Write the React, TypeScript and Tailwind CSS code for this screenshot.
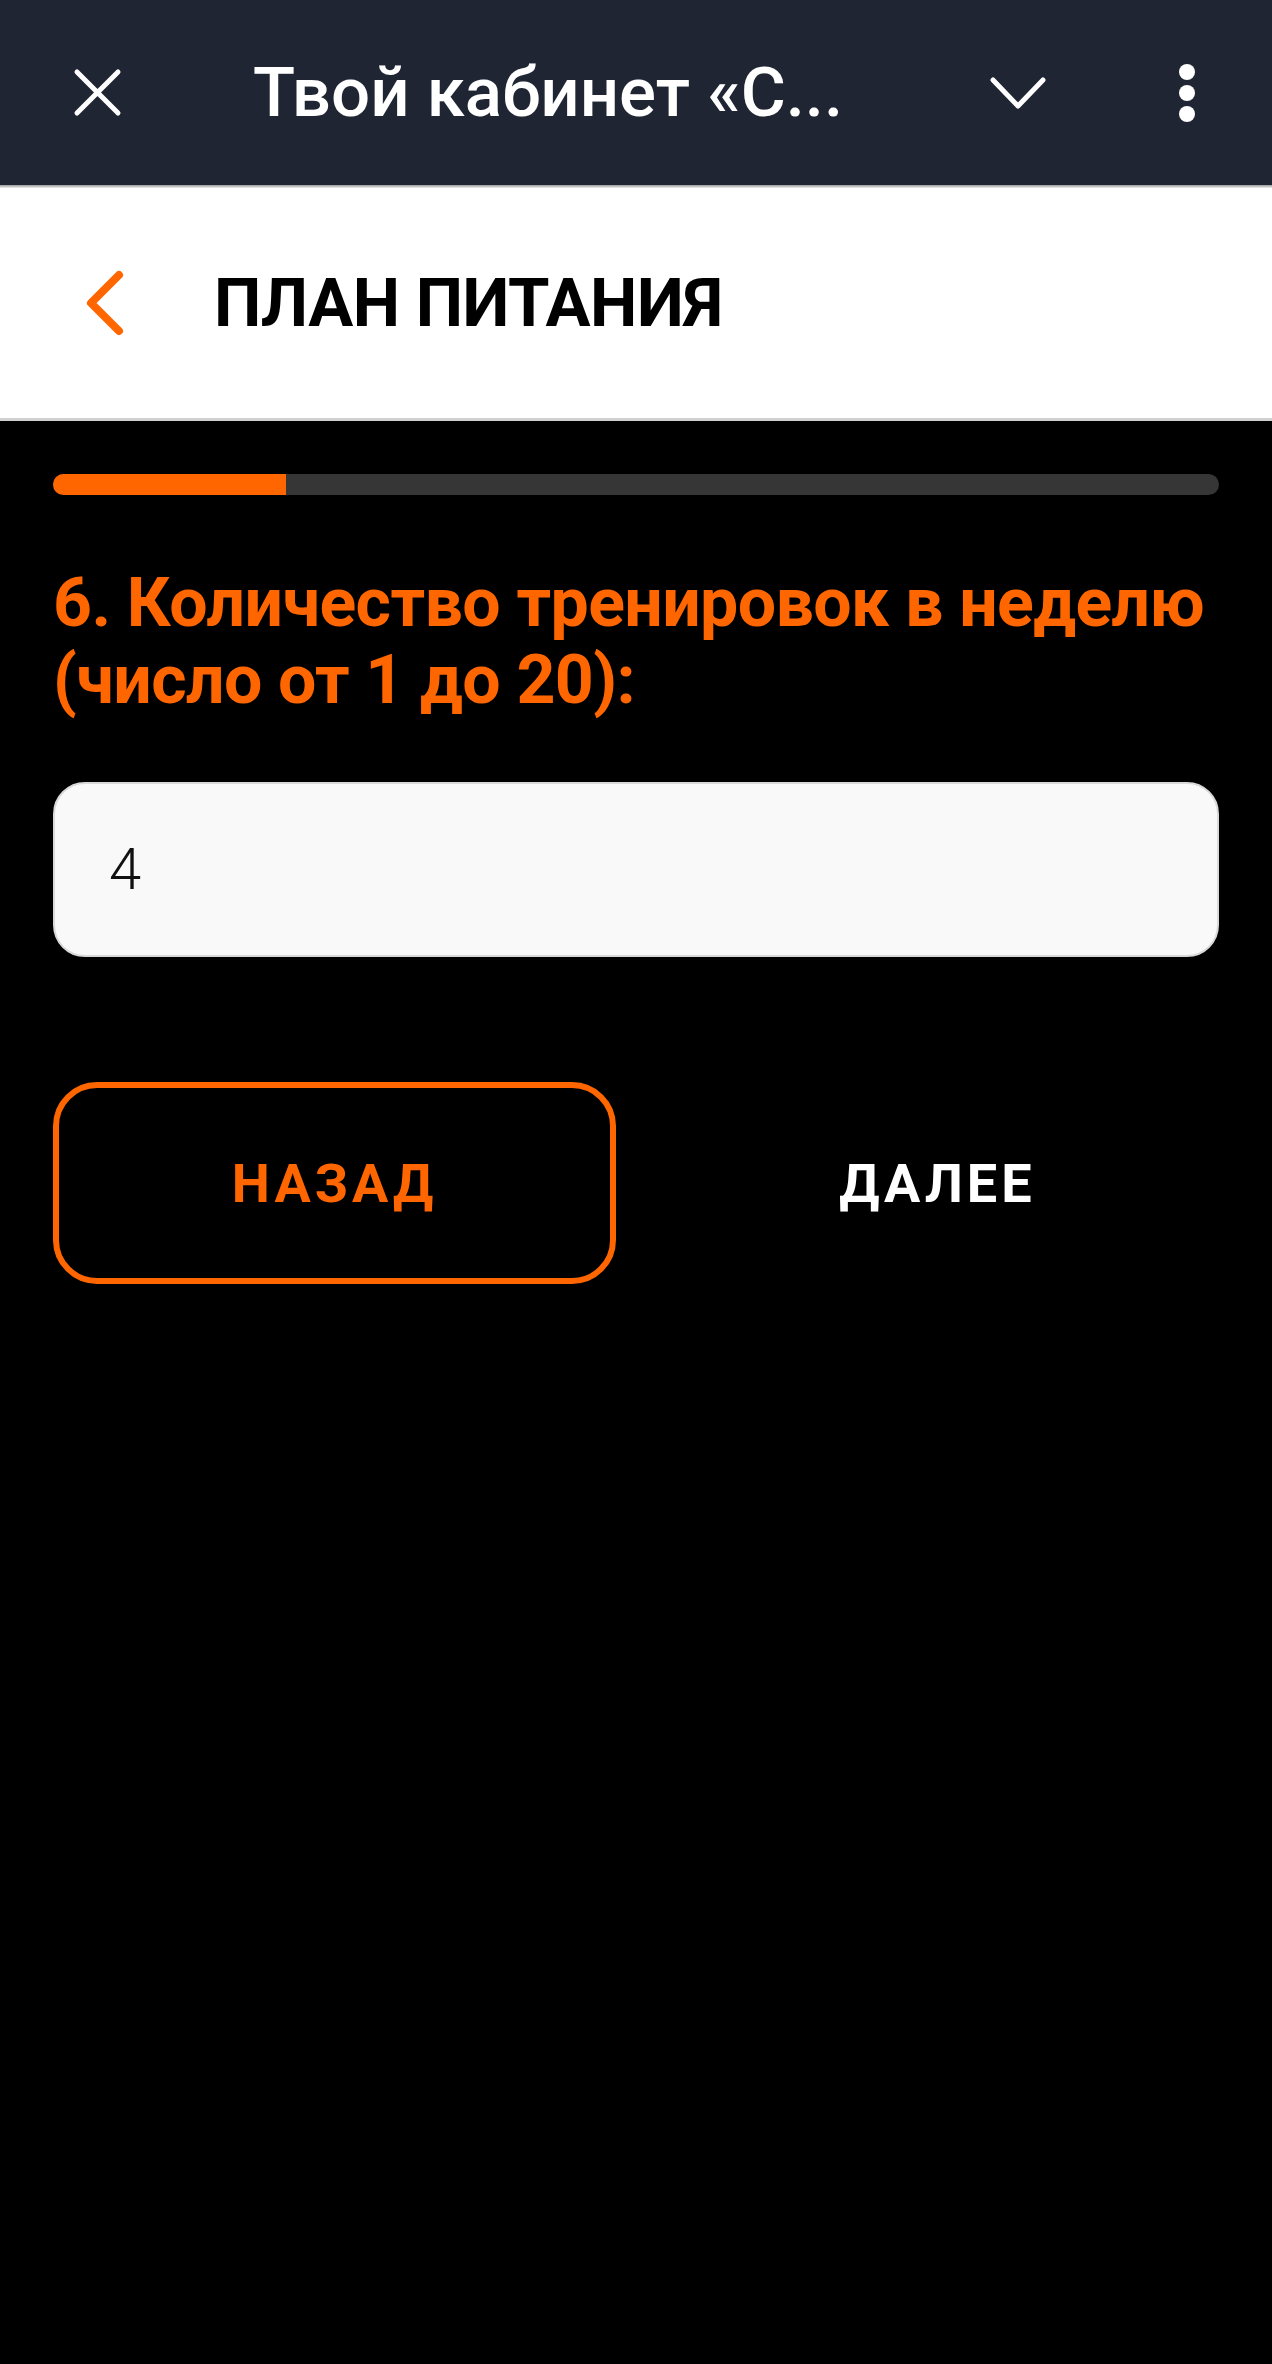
export default function App() {
  return (
    <div className="min-h-[2364px] w-full bg-black font-['Roboto',sans-serif]">
      {/* app bar */}
      <div className="flex h-[185px] items-center bg-[#1f2532] text-white">
        <svg className="ml-[73px] h-[49px] w-[49px] shrink-0" viewBox="0 0 49 49" fill="none" stroke="white" strokeWidth="5" strokeLinecap="round">
          <path d="M4 4L45 45M45 4L4 45" />
        </svg>
        <div className="ml-[131px] flex-1 text-[69px] font-medium leading-none">Твой кабинет «С...</div>
        <svg className="h-[34px] w-[56px] shrink-0" viewBox="0 0 56 34" fill="none" stroke="white" strokeWidth="5" strokeLinecap="round" strokeLinejoin="round">
          <path d="M3 4L28 30L53 4" />
        </svg>
        <div className="ml-[132px] mr-[76px] flex w-[18px] flex-col items-center gap-[5px]">
          <div className="h-[16px] w-[16px] rounded-full bg-white" />
          <div className="h-[16px] w-[16px] rounded-full bg-white" />
          <div className="h-[16px] w-[16px] rounded-full bg-white" />
        </div>
      </div>
      <div className="h-[3px] bg-gradient-to-b from-[#9a9a9a] to-[#eeeeee]" />

      {/* page header */}
      <div className="flex h-[233px] items-center border-b-[3px] border-[#d0d0d0] bg-white">
        <svg className="ml-[85px] h-[66px] w-[40px] shrink-0" viewBox="0 0 40 66" fill="none" stroke="#ff6600" strokeWidth="8" strokeLinecap="round" strokeLinejoin="round">
          <path d="M34 5L6 33L34 61" />
        </svg>
        <div className="ml-[89px] text-[67px] font-bold leading-none tracking-[-0.5px] text-black">ПЛАН ПИТАНИЯ</div>
      </div>

      {/* content */}
      <div className="px-[53px]">
        <div className="mt-[53px] h-[21px] overflow-hidden rounded-full bg-[#363636]">
          <div className="h-full w-[20%] bg-[#ff6600]" />
        </div>

        <div className="mt-[70px] text-[68px] font-bold leading-[77px] tracking-[-0.6px] text-[#ff6600]">
          6. Количество тренировок в неделю (число от 1 до 20):
        </div>

        <div className="mt-[63px] flex h-[175px] items-center rounded-[32px] border-2 border-[#d9d9d9] bg-[#f9f9f9] pl-[54px] text-[58px] font-light text-[#111]">
          4
        </div>

        <div className="mt-[125px] grid grid-cols-2 gap-[40px]">
          <button className="flex h-[202px] items-center justify-center rounded-[44px] border-[6px] border-[#ff6600] text-[54px] font-bold tracking-[4px] text-[#ff6600]">
            НАЗАД
          </button>
          <button className="flex h-[202px] items-center justify-center text-[54px] font-bold tracking-[4px] text-white">
            ДАЛЕЕ
          </button>
        </div>
      </div>
    </div>
  );
}
